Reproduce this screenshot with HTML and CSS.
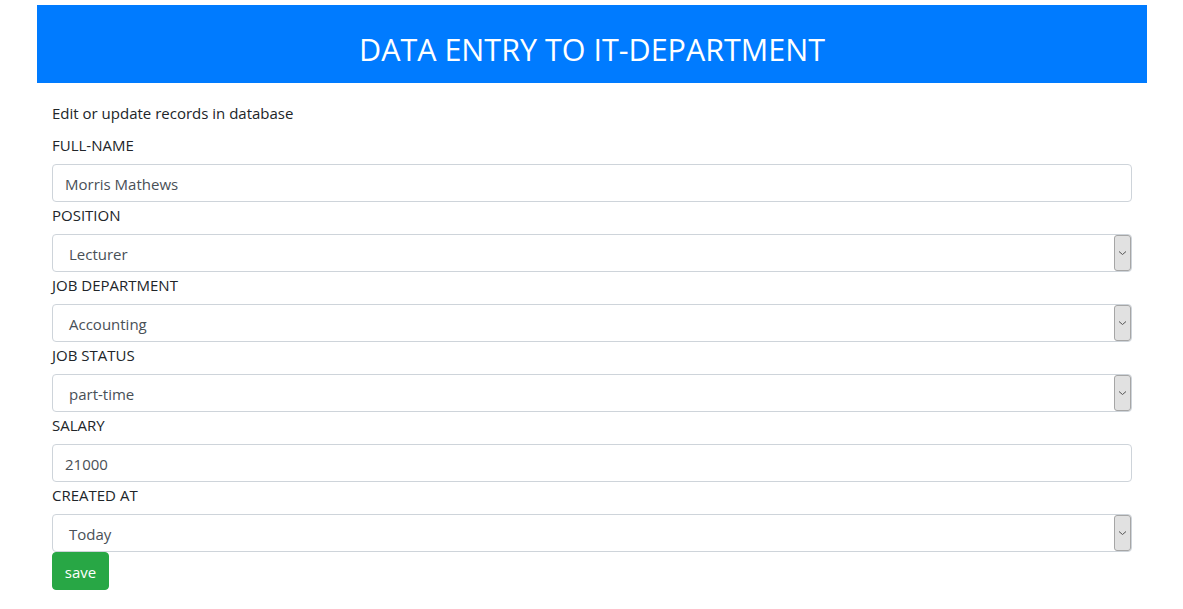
FILE: index.html
```html
<!DOCTYPE html>
<html lang="en">
<head>
<meta charset="utf-8">
<title>Data entry</title>
<link rel="stylesheet" href="styles.css">
</head>
<body>
<div class="container">
  <header class="banner"><h1 class="banner-title">DATA ENTRY TO IT-DEPARTMENT</h1></header>
  <form class="form">
    <p class="intro">Edit or update records in database</p>
    <label class="label">FULL-NAME</label>
    <div class="control"><span class="value">Morris Mathews</span></div>
    <label class="label">POSITION</label>
    <div class="control select"><span class="value">Lecturer</span><span class="arrow"><svg width="9" height="6" viewBox="0 0 9 6"><path d="M1 1.5 L4.5 4.5 L8 1.5" fill="none" stroke="#555" stroke-width="1"/></svg></span></div>
    <label class="label">JOB DEPARTMENT</label>
    <div class="control select"><span class="value">Accounting</span><span class="arrow"><svg width="9" height="6" viewBox="0 0 9 6"><path d="M1 1.5 L4.5 4.5 L8 1.5" fill="none" stroke="#555" stroke-width="1"/></svg></span></div>
    <label class="label">JOB STATUS</label>
    <div class="control select"><span class="value">part-time</span><span class="arrow"><svg width="9" height="6" viewBox="0 0 9 6"><path d="M1 1.5 L4.5 4.5 L8 1.5" fill="none" stroke="#555" stroke-width="1"/></svg></span></div>
    <label class="label">SALARY</label>
    <div class="control"><span class="value">21000</span></div>
    <label class="label">CREATED AT</label>
    <div class="control select"><span class="value">Today</span><span class="arrow"><svg width="9" height="6" viewBox="0 0 9 6"><path d="M1 1.5 L4.5 4.5 L8 1.5" fill="none" stroke="#555" stroke-width="1"/></svg></span></div>
    <div class="actions"><button type="button" class="btn-save">save</button></div>
  </form>
</div>
</body>
</html>
```
FILE: styles.css
```css
* { box-sizing: border-box; }
html, body { margin: 0; padding: 0; background: #fff; }
body {
  font-family: "Open Sans", "Noto Sans", sans-serif;
  font-size: 15px;
  line-height: 24px;
  color: #212529;
}
.container {
  width: 1140px;
  margin: 0 0 0 22px;
  padding: 5px 15px 0 15px;
}
.banner {
  background: #007bff;
  height: 78px;
  display: flex;
  align-items: center;
  justify-content: center;
}
.banner-title {
  margin: 0;
  color: #fff;
  font-weight: 400;
  font-size: 30.5px;
  line-height: 40px;
  padding-top: 10px;
}
.form {
  padding: 18px 15px 0 15px;
  display: flex;
  flex-direction: column;
}
.intro { margin: 0 0 8px 0; }
.label { display: block; margin-bottom: 7px; }
.control {
  height: 38px;
  border: 1px solid #ced4da;
  border-radius: 4px;
  display: flex;
  align-items: center;
  padding-left: 12px;
  padding-top: 1px;
  color: #495057;
  margin-bottom: 1px;
}
.select { padding-left: 16px; padding-right: 0; }
.value { flex: 1; }
.arrow {
  width: 17px;
  height: 36px;
  margin-top: -1px;
  background: #e1e1e1;
  border: 1px solid #a6a6a6;
  border-radius: 3px;
  display: flex;
  align-items: center;
  justify-content: center;
}
.actions { display: flex; margin-top: -1px; }
.btn-save {
  font-family: inherit;
  font-size: 15px;
  height: 38px;
  width: 57px;
  background: #28a745;
  border: 1px solid #28a745;
  border-radius: 4px;
  color: #fff;
  padding: 1px 0 0 0;
}
```
